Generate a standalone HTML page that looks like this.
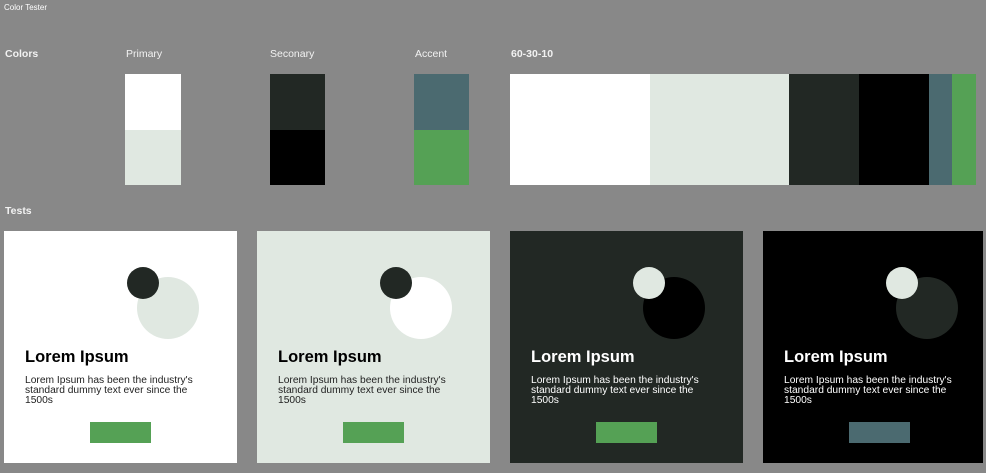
<!DOCTYPE html>
<html><head><style>
*{margin:0;padding:0;box-sizing:border-box}
body{width:986px;height:473px;background:#888;font-family:"Liberation Sans",sans-serif;position:relative;overflow:hidden;color:#fff}
.a{position:absolute}
.lbl{font-size:10.5px;color:#f2f2f2}
.b{font-weight:bold}
.card{position:absolute;top:231px;width:233px;height:232px}
.card .s{position:absolute;left:123px;top:36px;width:32px;height:32px;border-radius:50%;z-index:2}
.card .g{position:absolute;left:133px;top:46px;width:62px;height:62px;border-radius:50%}
.card h2{position:absolute;left:21px;top:117px;font-size:16.5px;font-weight:bold}
.card p{position:absolute;left:21px;top:145px;width:180px;font-size:10.25px;line-height:10px}
.card .btn{position:absolute;left:86px;top:191px;width:61px;height:21px}
</style></head><body>
<div class="a" style="left:4px;top:3px;font-size:8px">Color Tester</div>
<div class="a lbl b" style="left:5px;top:48px">Colors</div>
<div class="a lbl" style="left:126px;top:48px">Primary</div>
<div class="a lbl" style="left:270px;top:48px">Seconary</div>
<div class="a lbl" style="left:415px;top:48px">Accent</div>
<div class="a lbl b" style="left:511px;top:48px">60-30-10</div>
<div class="a" style="left:125px;top:74px;width:56px;height:56px;background:#fff"></div>
<div class="a" style="left:125px;top:130px;width:56px;height:55px;background:#e0e8e1"></div>
<div class="a" style="left:270px;top:74px;width:55px;height:56px;background:#222824"></div>
<div class="a" style="left:270px;top:130px;width:55px;height:55px;background:#000"></div>
<div class="a" style="left:414px;top:74px;width:55px;height:56px;background:#4b6a70"></div>
<div class="a" style="left:414px;top:130px;width:55px;height:55px;background:#55a155"></div>
<div class="a" style="left:510px;top:74px;width:140px;height:111px;background:#fff"></div>
<div class="a" style="left:650px;top:74px;width:139px;height:111px;background:#e0e8e1"></div>
<div class="a" style="left:789px;top:74px;width:70px;height:111px;background:#222824"></div>
<div class="a" style="left:859px;top:74px;width:70px;height:111px;background:#000"></div>
<div class="a" style="left:929px;top:74px;width:23px;height:111px;background:#4b6a70"></div>
<div class="a" style="left:952px;top:74px;width:24px;height:111px;background:#55a155"></div>
<div class="a lbl b" style="left:5px;top:205px">Tests</div>

<div class="card" style="left:4px;background:#fff;color:#000">
<div class="s" style="background:#222824"></div><div class="g" style="background:#e0e8e1"></div>
<h2>Lorem Ipsum</h2><p style="color:#222">Lorem Ipsum has been the industry's standard dummy text ever since the 1500s</p>
<div class="btn" style="background:#55a155"></div></div>

<div class="card" style="left:257px;background:#e0e8e1;color:#000">
<div class="s" style="background:#222824"></div><div class="g" style="background:#fff"></div>
<h2>Lorem Ipsum</h2><p style="color:#222">Lorem Ipsum has been the industry's standard dummy text ever since the 1500s</p>
<div class="btn" style="background:#55a155"></div></div>

<div class="card" style="left:510px;background:#222824">
<div class="s" style="background:#e0e8e1"></div><div class="g" style="background:#000"></div>
<h2>Lorem Ipsum</h2><p>Lorem Ipsum has been the industry's standard dummy text ever since the 1500s</p>
<div class="btn" style="background:#55a155"></div></div>

<div class="card" style="left:763px;width:220px;background:#000">
<div class="s" style="background:#e0e8e1"></div><div class="g" style="background:#222824"></div>
<h2>Lorem Ipsum</h2><p>Lorem Ipsum has been the industry's standard dummy text ever since the 1500s</p>
<div class="btn" style="background:#4b6a70"></div></div>
</body></html>
